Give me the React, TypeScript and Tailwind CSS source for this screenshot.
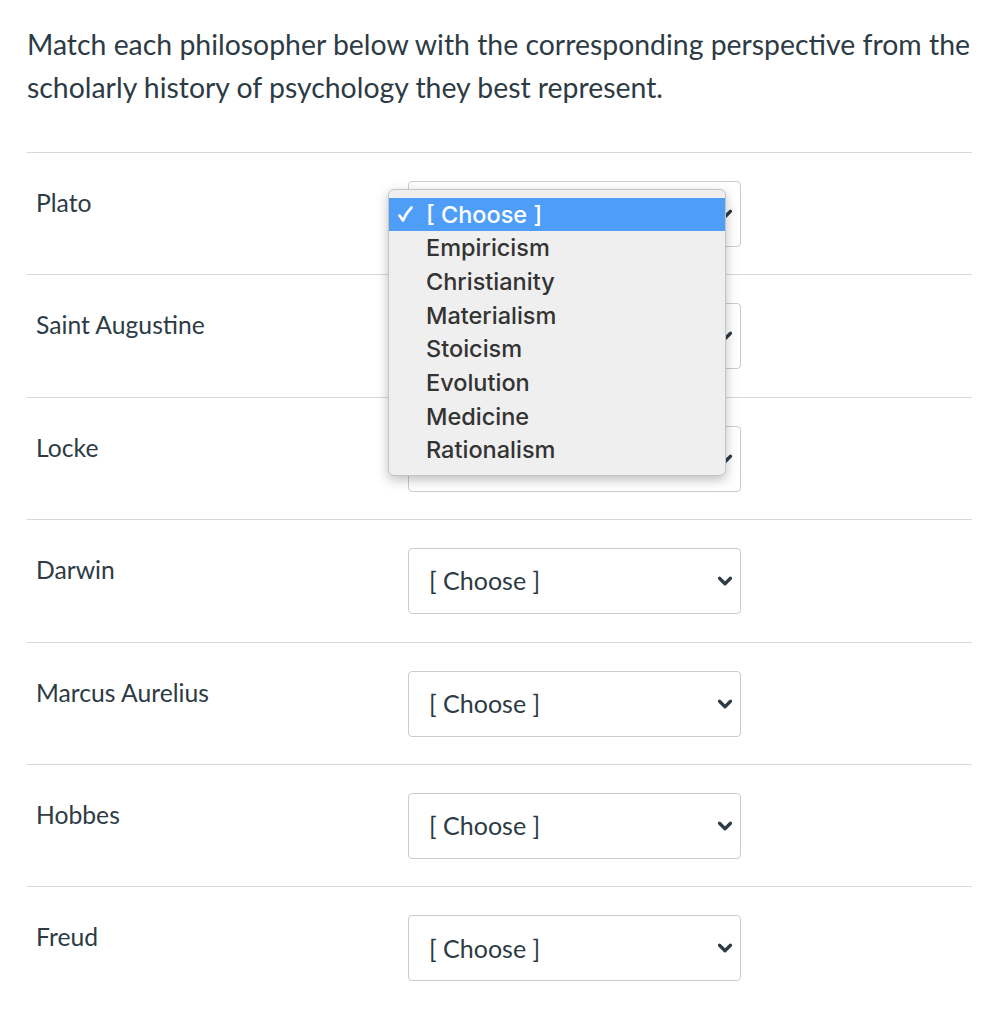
import { ChevronDown } from 'lucide-react'

const rows = ['Plato', 'Saint Augustine', 'Locke', 'Darwin', 'Marcus Aurelius', 'Hobbes', 'Freud']

const options = ['Empiricism', 'Christianity', 'Materialism', 'Stoicism', 'Evolution', 'Medicine', 'Rationalism']

function SelectBox() {
  return (
    <div className="flex h-[66px] w-[333px] items-center justify-between rounded-[4px] border border-[#c7cdd1] bg-white pl-[20px] pr-[4px]">
      <span className="text-[25px] text-[#2d3b45]">[ Choose ]</span>
      <ChevronDown className="h-[22px] w-[22px] text-[#2d3b45]" strokeWidth={3.5} />
    </div>
  )
}

export default function App() {
  return (
    <div
      className="relative min-h-[1024px] bg-white px-[27px] pt-[23px] text-[#2d3b45]"
      style={{ fontFamily: 'Lato, "Open Sans", sans-serif' }}
    >
      <p className="text-[28.4px] leading-[43px]">
        Match each philosopher below with the corresponding perspective from the scholarly history of psychology they best represent.
      </p>

      <div className="mt-[43px]">
        {rows.map((name) => (
          <div key={name} className="flex border-t border-[#d9d9d9] pb-[27.4px] pt-[28px]">
            <div className="w-[381px] pl-[9px] pt-[4px] text-[24.7px] leading-[36px]">{name}</div>
            <SelectBox />
          </div>
        ))}
      </div>

      {/* open native dropdown */}
      <div
        className="absolute left-[388px] top-[189px] w-[338px] rounded-[6px] border border-[#c4c4c4] bg-[#efefef] py-[8px] shadow-[0_4px_12px_rgba(0,0,0,0.25)]"
        style={{ fontFamily: 'Inter, "Liberation Sans", sans-serif' }}
      >
        <div className="flex h-[33px] items-center bg-[#4e9ef8] text-[23.5px] font-medium text-white">
          <span className="flex w-[37px] justify-start pl-[9px]">
            <svg width="15" height="17" viewBox="0 0 15 17" fill="none">
              <path d="M1.5 9.5 L5 14.5 Q8 7 13.5 1.5" stroke="white" strokeWidth="2.6" strokeLinecap="round" strokeLinejoin="round" />
            </svg>
          </span>
          <span>[ Choose ]</span>
        </div>
        {options.map((o) => (
          <div key={o} className="flex h-[33.7px] items-center pl-[37px] text-[23.5px] font-medium text-[#333]">
            {o}
          </div>
        ))}
      </div>
    </div>
  )
}
